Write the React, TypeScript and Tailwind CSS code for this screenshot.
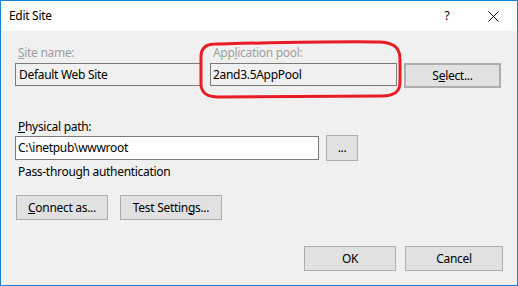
import React from 'react';

const font = { fontFamily: '"Noto Sans", "Open Sans", sans-serif' };

const Btn = ({ children, className = '' }: { children: React.ReactNode; className?: string }) => (
  <div
    className={`flex items-center justify-center h-[25px] bg-[#e1e1e1] border border-[#adadad] text-[12px] text-black ${className}`}
  >
    {children}
  </div>
);

export default function App() {
  return (
    <div
      className="relative w-[518px] h-[286px] border border-[#1883d7] bg-[#f0f0f0] flex flex-col overflow-hidden tracking-[-0.3px]"
      style={font}
    >
      {/* Title bar */}
      <div className="h-[30px] bg-white flex items-center pl-[8px] text-[12px] text-black">
        <span className="flex-1">Edit Site</span>
        <span className="w-[10px] text-center mr-[36px]">?</span>
        <svg width="11" height="11" viewBox="0 0 11 11" className="mr-[18px]">
          <path d="M0.5 0.5 L10.5 10.5 M10.5 0.5 L0.5 10.5" stroke="#000" strokeWidth="1" />
        </svg>
      </div>

      {/* Content */}
      <div className="flex-1 flex flex-col pl-[14px] pr-[14px] pt-[14px] text-[12px] text-black">
        {/* Site name / app pool */}
        <div className="flex">
          <div className="w-[187px] flex flex-col">
            <div className="ml-[3px] h-[16px] leading-[16px] text-[#a0a0a0]">
              <span className="underline">S</span>ite name:
            </div>
            <div className="mt-[2px] h-[23px] border border-[#7a7a7a] bg-[#f0f0f0] flex items-center pl-[3px]">
              Default Web Site
            </div>
          </div>
          <div className="ml-[8px] w-[187px] flex flex-col">
            <div className="ml-[3px] h-[16px] leading-[16px] text-[#a0a0a0]">
              App<span className="underline">l</span>ication pool:
            </div>
            <div className="mt-[2px] h-[23px] border border-[#7a7a7a] bg-[#f0f0f0] flex items-center pl-[2px]">
              2and3.5AppPool
            </div>
          </div>
          <div className="ml-[7px] pt-[18px]">
            <Btn className="w-[97px] border-2 border-[#0078d7]">
              S<span className="underline">e</span>lect...
            </Btn>
          </div>
        </div>

        {/* Physical path */}
        <div className="mt-[31px] ml-[3px] h-[16px] leading-[16px]">
          <span className="underline">P</span>hysical path:
        </div>
        <div className="flex items-center h-[26px]">
          <div className="w-[304px] h-[24px] border border-[#7a7a7a] bg-white flex items-center pl-[2px]">
            C:\inetpub\wwwroot
          </div>
          <Btn className="ml-[7px] w-[32px] h-[26px]">...</Btn>
        </div>
        <div className="mt-[3px] ml-[3px] h-[16px] leading-[16px]">Pass-through authentication</div>

        <div className="flex mt-[15px] ml-[1px] gap-[12px]">
          <Btn className="w-[92px]">
            <span className="underline">C</span>onnect as...
          </Btn>
          <Btn className="w-[102px]">
            Test Settin<span className="underline">g</span>s...
          </Btn>
        </div>

        <div className="flex justify-end mt-[26px] gap-[9px]">
          <Btn className="w-[92px]">OK</Btn>
          <Btn className="w-[98px]">Cancel</Btn>
        </div>
      </div>

      {/* Red annotation */}
      <svg
        className="absolute left-[-1px] top-[-1px] pointer-events-none"
        width="518"
        height="286"
        viewBox="0 0 518 286"
      >
        <path
          d="M215 44 C260 43 340 41 380 42 C395 43 400 48 400 60 L400 82 C400 92 394 96 382 96 L218 97 C207 97 201 92 201 84 L201 57 C201 48 206 44 215 44 Z"
          fill="none"
          stroke="#e81c24"
          strokeWidth="3"
        />
      </svg>
    </div>
  );
}
